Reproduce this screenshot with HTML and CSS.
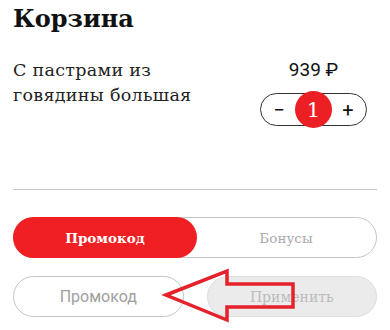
FILE: index.html
```html
<!DOCTYPE html>
<html lang="ru">
<head>
<meta charset="utf-8">
<link rel="stylesheet" href="styles.css">
</head>
<body>
<div class="page">
  <h1 class="title">Корзина</h1>
  <div class="item">
    <div class="item-name">С пастрами из<br>говядины большая</div>
    <div class="item-side">
      <div class="price">939 ₽</div>
      <div class="stepper">
        <span class="step">−</span>
        <span class="count">1</span>
        <span class="step">+</span>
      </div>
    </div>
  </div>
  <div class="divider"></div>
  <div class="tabs">
    <div class="tab active">Промокод</div>
    <div class="tab">Бонусы</div>
  </div>
  <div class="promo">
    <div class="input">Промокод</div>
    <div class="apply">Применить</div>
  </div>
  <svg class="arrow" width="390" height="330" viewBox="0 0 390 330">
    <polygon points="166,295 227,271 227,284 293,284 293,307 227,307 227,320" fill="none" stroke="#e5222b" stroke-width="3.5" stroke-linejoin="miter"/>
  </svg>
</div>
</body>
</html>
```
FILE: styles.css
```css
html, body { margin: 0; padding: 0; background: #fff; }
.page {
  position: relative;
  width: 390px;
  height: 330px;
  box-sizing: border-box;
  padding: 0 13px 0 13px;
  overflow: hidden;
}
.title {
  margin: 0;
  padding-top: 4px;
  font-family: "DejaVu Serif", serif;
  font-weight: bold;
  font-size: 24px;
  line-height: 30px;
  color: #111;
}
.item {
  display: flex;
  justify-content: space-between;
  margin-top: 25px;
}
.item-name {
  font-family: "DejaVu Serif", serif;
  font-size: 17.5px;
  letter-spacing: 0.3px;
  line-height: 25px;
  color: #222;
  margin-top: -1px;
}
.item-side {
  display: flex;
  flex-direction: column;
  align-items: center;
  width: 107px;
  margin-right: 10px;
}
.price {
  font-family: Roboto, "Noto Sans", sans-serif;
  font-size: 19px;
  line-height: 20px;
  color: #111;
  margin-top: 1px;
}
.stepper {
  margin-top: 13px;
  width: 107px;
  height: 33px;
  box-sizing: border-box;
  border: 1px solid #333;
  border-radius: 17px;
  display: flex;
  align-items: center;
  justify-content: space-between;
  padding: 0 12px 0 12px;
  font-family: Roboto, "Noto Sans", sans-serif;
}
.step {
  font-size: 20px;
  color: #111;
  width: 12px;
  text-align: center;
}
.count {
  width: 37px;
  height: 37px;
  border-radius: 50%;
  background: #ec1f24;
  color: #fff;
  font-family: "DejaVu Serif", serif;
  font-size: 21px;
  display: flex;
  align-items: center;
  justify-content: center;
}
.divider {
  margin-top: 63px;
  height: 1px;
  background: #c8c8c8;
}
.tabs {
  margin-top: 27px;
  height: 41px;
  box-sizing: border-box;
  border: 1px solid #c4c4c4;
  border-radius: 21px;
  display: flex;
  font-family: "DejaVu Serif", serif;
}
.tab {
  flex: 1;
  display: flex;
  align-items: center;
  justify-content: center;
  font-size: 13.5px;
  color: #aaa;
  border-radius: 21px;
  margin: -1px;
}
.tab.active {
  flex: 0 0 184px;
  background: #ef1f24;
  color: #fff;
  font-weight: bold;
}
.promo {
  display: flex;
  gap: 23px;
  margin-top: 18px;
}
.input, .apply {
  flex: 1;
  height: 41px;
  box-sizing: border-box;
  border-radius: 21px;
  display: flex;
  align-items: center;
  justify-content: center;
}
.input {
  border: 1px solid #c4c4c4;
  font-family: Roboto, "Noto Sans", sans-serif;
  font-size: 16px;
  color: #a0a0a0;
}
.apply {
  background: #ebebeb;
  border: 1px solid #dedede;
  font-family: "DejaVu Serif", serif;
  font-size: 14px;
  color: #bcbcbc;
}
.arrow {
  position: absolute;
  left: 0;
  top: 0;
  pointer-events: none;
}
```
